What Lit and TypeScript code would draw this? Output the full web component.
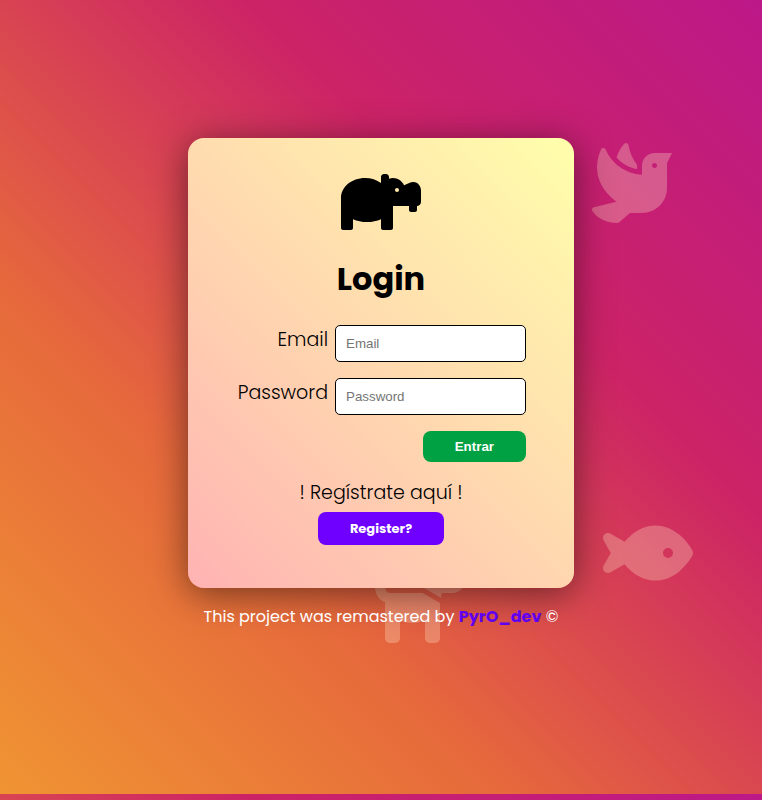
import { LitElement, html, css, svg } from "lit";
import { customElement } from "lit/decorators.js";

const hippo = svg`<path d="M581.12 96.2c-27.67-.15-52.5 17.58-76.6 26.62C489.98 88.27 455.83 64 416 64c-11.28 0-21.95 2.3-32 5.88V56c0-13.26-10.75-24-24-24h-16c-13.25 0-24 10.74-24 24v48.98C286.01 79.58 241.24 64 192 64 85.96 64 0 135.64 0 224v240c0 8.84 7.16 16 16 16h64c8.84 0 16-7.16 16-16v-70.79C128.35 407.57 166.72 416 208 416s79.65-8.43 112-22.79V464c0 8.84 7.16 16 16 16h64c8.84 0 16-7.16 16-16V288h128v32c0 8.84 7.16 16 16 16h32c8.84 0 16-7.16 16-16v-32c17.67 0 32-14.33 32-32v-92.02c0-34.09-24.79-67.59-58.88-67.78zM448 176c-8.84 0-16-7.16-16-16s7.16-16 16-16 16 7.16 16 16-7.16 16-16 16z"/>`;
const dove = svg`<path d="M288 167.2v-28.1c-28.2-36.3-47.1-79.3-54.1-125.2-2.1-13.5-19-18.8-27.8-8.3-21.1 24.9-37.7 54.1-48.9 86.5 34.2 38.3 80 64.6 130.8 75.1zM400 64c-44.2 0-80 35.9-80 80.1v59.4C215.6 197.3 127 133 87 41.8c-5.5-12.5-23.2-13.2-29-.9C41.4 76 32 115.2 32 156.6c0 70.8 34.1 136.9 85.1 185.9 13.2 12.7 26.1 23.2 38.9 32.8l-143.9 36C1.2 414-3.4 426.4 2.6 435.7 20 462.6 63 508.2 155.8 512c8 .3 16-2.6 22.1-7.9l65.2-56.1H320c88.4 0 160-71.5 160-159.9V128l32-64H400zm0 96.1c-8.8 0-16-7.2-16-16s7.2-16 16-16 16 7.2 16 16-7.2 16-16 16z"/>`;
const fish = svg`<path d="M180.5 141.5C219.7 108.5 272.6 80 336 80s116.3 28.5 155.5 61.5c39.1 33 66.9 72.4 81 99.8c4.7 9.2 4.7 20.1 0 29.3c-14.1 27.4-41.9 66.8-81 99.8C452.3 403.5 399.4 432 336 432s-116.3-28.5-155.5-61.5c-16.2-13.7-30.5-28.5-42.7-43.1L48.1 379.6c-12.5 7.3-28.4 5.3-38.7-4.9S-3 348.7 4.2 336.1L50 256 4.2 175.9c-7.2-12.6-5-28.4 5.3-38.6s26.1-12.2 38.7-4.9l89.7 52.3c12.2-14.6 26.5-29.4 42.7-43.1zM448 256a32 32 0 1 0 -64 0 32 32 0 1 0 64 0z"/>`;
const dog = svg`<path d="M309.6 158.5L332.7 19.8C334.6 8.4 344.5 0 356.1 0c7.5 0 14.5 3.5 19 9.5L392 32h52.1c12.7 0 24.9 5.1 33.9 14.1L496 64h56c13.3 0 24 10.7 24 24v24c0 44.2-35.8 80-80 80H464 448 426.7l-5.1 30.5-112-64zM416 256.1L416 480c0 17.7-14.3 32-32 32H352c-17.7 0-32-14.3-32-32V364.8c-24 12.3-51.2 19.2-80 19.2s-56-6.9-80-19.2V480c0 17.7-14.3 32-32 32H96c-17.7 0-32-14.3-32-32V249.8c-28.8-10.9-51.4-35.3-59.2-66.5L1 167.8c-4.3-17.1 6.1-34.5 23.3-38.8s34.5 6.1 38.8 23.3l3.9 15.5C70.5 182 83.3 192 98 192h30 16H303.8L416 256.1zM464 80a16 16 0 1 0 -32 0 16 16 0 1 0 32 0z"/>`;

@customElement("app-root")
export class AppRoot extends LitElement {
  static styles = css`
    :host {
      display: flex;
      flex-direction: column;
      align-items: center;
      justify-content: center;
      gap: 17px;
      box-sizing: border-box;
      min-height: 100vh;
      padding: 0 16px 33px;
      position: relative;
      overflow: hidden;
      background: linear-gradient(45deg, #f09433, #e6683c, #cc2366, #bc1888)
        0 0 / 100% calc(100vh - 6px);
      font-family: Poppins, Inter, sans-serif;
      color: #000;
    }
    .animal {
      position: absolute;
      height: 80px;
      fill: #ffe4c4;
      opacity: 0.3;
    }
    .dove { left: 592px; top: 143px; }
    .fish { left: 603px; top: 513px; }
    .dog { left: 375px; top: 563px; }
    .card {
      position: relative;
      box-sizing: border-box;
      width: 100%;
      max-width: 386px;
      padding: 32px 48px 43px;
      border-radius: 16px;
      background: linear-gradient(45deg, #ffb3b3, #ffffab);
      box-shadow: 0 6px 36px rgba(0, 0, 0, 0.5);
      display: flex;
      flex-direction: column;
      align-items: center;
    }
    .logo {
      width: 80px;
      height: 64px;
    }
    h1 {
      margin: 20px 0 22px;
      font-size: 32px;
      line-height: 49px;
      font-weight: 700;
    }
    form {
      width: 100%;
      display: grid;
      grid-template-columns: 1fr 191px;
      column-gap: 7px;
      row-gap: 16px;
    }
    label {
      text-align: right;
    }
    label, .hint {
      font-size: 19px;
      line-height: 30px;
      font-weight: 300;
    }
    input {
      box-sizing: border-box;
      width: 100%;
      height: 37px;
      padding: 10px;
      border: 1px solid #000;
      border-radius: 5px;
      background: #fff;
      font-family: "Liberation Sans", Arial, sans-serif;
    }
    input::placeholder { color: #757575; }
    button {
      border: 0;
      padding: 8px 32px;
      border-radius: 8px;
      color: #fff;
      font-weight: 700;
    }
    .enter {
      grid-column: 2;
      justify-self: end;
      height: 31px;
      background: #00a143;
      font-family: "Liberation Sans", Arial, sans-serif;
    }
    .hint { margin: 16px 0 4px; }
    .register {
      height: 33px;
      padding: 7px 32px 8px;
      background: #6f00ff;
      font-family: inherit;
      font-size: 13px;
    }
    footer {
      position: relative;
      font-size: 16px;
      line-height: 24px;
      color: #fff;
    }
    a {
      color: #6000f0;
      font-weight: 700;
      text-decoration: none;
    }
  `;

  render() {
    return html`
      <svg class="animal dove" viewBox="0 0 512 512" aria-hidden="true">${dove}</svg>
      <svg class="animal fish" viewBox="0 0 576 512" aria-hidden="true">${fish}</svg>
      <svg class="animal dog" viewBox="0 0 576 512" aria-hidden="true">${dog}</svg>
      <main class="card">
        <svg class="logo" viewBox="0 0 640 512" aria-hidden="true">${hippo}</svg>
        <h1>Login</h1>
        <form @submit=${(e: Event) => e.preventDefault()}>
          <label for="email">Email</label>
          <input id="email" type="email" placeholder="Email" />
          <label for="password">Password</label>
          <input id="password" type="password" placeholder="Password" />
          <button class="enter" type="submit">Entrar</button>
        </form>
        <p class="hint">! Regístrate aquí !</p>
        <button class="register" type="button">Register?</button>
      </main>
      <footer>This project was remastered by <a href="#">PyrO_dev</a> ©</footer>
    `;
  }
}
